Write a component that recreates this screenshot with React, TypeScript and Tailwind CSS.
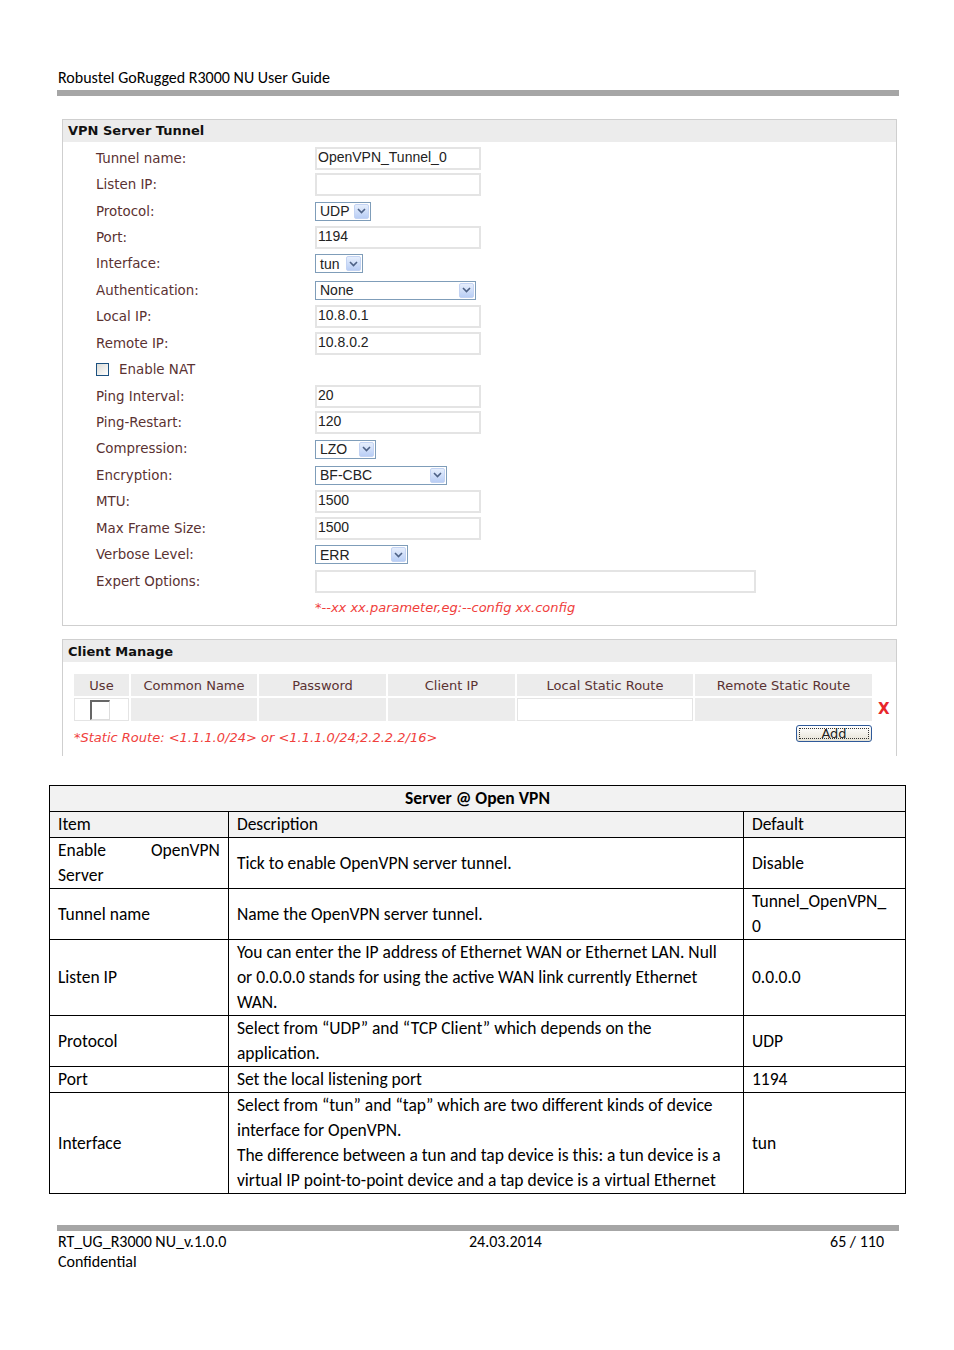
import React from 'react';

const ui = "font-['DejaVu_Sans','Verdana',sans-serif]";
const arial = "font-['Liberation_Sans','Arial',sans-serif]";
const doc = "font-['Carlito','Lato','Open_Sans',sans-serif]";

const Chevron = () => (
  <svg width="9" height="6" viewBox="0 0 9 6">
    <path d="M1 1 L4.5 4.5 L8 1" fill="none" stroke="#4d6185" strokeWidth="1.6" />
  </svg>
);

const TextBox = ({ value = '', wide = false }: { value?: string; wide?: boolean }) => (
  <div
    className={`h-[23px] ${wide ? 'w-[441px]' : 'w-[166px]'} border-2 border-[#e4e4e4] bg-white pl-[1px] text-[14px] leading-[16px] text-[#222] ${arial}`}
  >
    {value}
  </div>
);

const Select = ({ value, width }: { value: string; width: string }) => (
  <div className={`flex h-[19px] ${width} items-center border border-[#7f9db9] bg-white`}>
    <span className={`pl-[4px] text-[14px] leading-none text-[#222] ${arial}`}>{value}</span>
    <span className="ml-auto mr-[1px] flex h-[15px] w-[15px] items-center justify-center rounded-[2px] border border-[#c3d3f3] bg-gradient-to-b from-[#e6eefc] to-[#b9cef5]">
      <Chevron />
    </span>
  </div>
);

type Row = { label: string; field: React.ReactNode };

const rows: Row[] = [
  { label: 'Tunnel name:', field: <TextBox value="OpenVPN_Tunnel_0" /> },
  { label: 'Listen IP:', field: <TextBox /> },
  { label: 'Protocol:', field: <Select value="UDP" width="w-[56px]" /> },
  { label: 'Port:', field: <TextBox value="1194" /> },
  { label: 'Interface:', field: <Select value="tun" width="w-[48px]" /> },
  { label: 'Authentication:', field: <Select value="None" width="w-[161px]" /> },
  { label: 'Local IP:', field: <TextBox value="10.8.0.1" /> },
  { label: 'Remote IP:', field: <TextBox value="10.8.0.2" /> },
];

const rows2: Row[] = [
  { label: 'Ping Interval:', field: <TextBox value="20" /> },
  { label: 'Ping-Restart:', field: <TextBox value="120" /> },
  { label: 'Compression:', field: <Select value="LZO" width="w-[61px]" /> },
  { label: 'Encryption:', field: <Select value="BF-CBC" width="w-[132px]" /> },
  { label: 'MTU:', field: <TextBox value="1500" /> },
  { label: 'Max Frame Size:', field: <TextBox value="1500" /> },
  { label: 'Verbose Level:', field: <Select value="ERR" width="w-[93px]" /> },
  { label: 'Expert Options:', field: <TextBox wide /> },
];

const FormRow = ({ row }: { row: Row }) => (
  <div className="flex h-[26.45px] items-center">
    <div className="w-[252px] pl-[33px] pt-[1px] text-[13.4px] text-[#5a3232]">{row.label}</div>
    <div>{row.field}</div>
  </div>
);

const PanelHead = ({ title }: { title: string }) => (
  <div className="flex h-[22px] items-center bg-[#ececec] pl-[5px] text-[13px] font-bold text-[#111]">{title}</div>
);

const VpnPanel = () => (
  <div className={`mt-[23px] ml-[5px] mr-[2px] border border-[#cfcfcf] ${ui}`}>
    <PanelHead title="VPN Server Tunnel" />
    <div className="pt-[3px] pb-[5px]">
      {rows.map((r) => (
        <FormRow key={r.label} row={r} />
      ))}
      <div className="flex h-[26.45px] items-center pl-[33px] text-[13.4px] text-[#5a3232]">
        <span className="mr-[10px] h-[13px] w-[13px] border border-[#1c5180] bg-gradient-to-br from-[#dcdcd7] to-white" />
        Enable NAT
      </div>
      {rows2.map((r) => (
        <FormRow key={r.label} row={r} />
      ))}
      <div className="flex h-[26px] items-center pl-[252px] text-[13px] italic text-[#f0403c]">
        *--xx xx.parameter,eg:--config xx.config
      </div>
    </div>
  </div>
);

const headCell = 'flex h-[22px] items-center justify-center bg-[#ececec] text-[13px] text-[#5a3232]';

const ClientPanel = () => (
  <div className={`mt-[13px] ml-[5px] mr-[2px] h-[117px] border-x border-t border-[#cfcfcf] ${ui}`}>
    <PanelHead title="Client Manage" />
    <div className="mt-[12px] flex items-start pl-[11px]">
      <div className="w-[798px]">
        <div className="grid grid-cols-[55px_126px_127px_127px_176px_177px] gap-[2px]">
          <div className={headCell}>Use</div>
          <div className={headCell}>Common Name</div>
          <div className={headCell}>Password</div>
          <div className={headCell}>Client IP</div>
          <div className={headCell}>Local Static Route</div>
          <div className={headCell}>Remote Static Route</div>
          <div className="flex h-[23px] items-center border border-[#e4e4e4] bg-white pl-[15px]">
            <span className="h-[20px] w-[20px] border-l-2 border-t-2 border-r border-b border-l-[#666] border-t-[#666] border-r-[#ddd] border-b-[#ddd] bg-white" />
          </div>
          <div className="h-[23px] bg-[#ececec]" />
          <div className="h-[23px] bg-[#ececec]" />
          <div className="h-[23px] bg-[#ececec]" />
          <div className="h-[23px] border border-[#e4e4e4] bg-white" />
          <div className="h-[23px] bg-[#ececec]" />
        </div>
        <div className="mt-[4px] flex items-start">
          <span className="pt-[3px] text-[13px] italic text-[#f0403c]">*Static Route: &lt;1.1.1.0/24&gt; or &lt;1.1.1.0/24;2.2.2.2/16&gt;</span>
          <div className="ml-auto flex h-[17px] w-[76px] items-center justify-center rounded-[3px] border border-[#2f5a9a] bg-gradient-to-b from-white to-[#e6e3d6] p-[2px]">
            <div className={`flex h-full w-full items-center justify-center border border-dotted border-[#333] text-[13px] leading-none text-[#222] ${ui}`}>
              Add
            </div>
          </div>
        </div>
      </div>
      <div className="ml-[6px] mt-[28px] text-[15px] font-bold leading-none text-[#e8262a]">X</div>
    </div>
  </div>
);

const td = 'border border-black px-[8px] align-middle';

const DocTable = () => (
  <table className={`mt-[29px] -mx-[8px] w-[857px] border-collapse text-[17.5px] leading-[25px] text-black ${doc}`}>
    <colgroup>
      <col className="w-[179px]" />
      <col className="w-[516px]" />
      <col className="w-[162px]" />
    </colgroup>
    <tbody>
      <tr className="h-[26px] bg-[#f2f2f2]">
        <td colSpan={3} className={`${td} text-center font-bold`}>Server @ Open VPN</td>
      </tr>
      <tr className="h-[26px] bg-[#f2f2f2]">
        <td className={td}>Item</td>
        <td className={td}>Description</td>
        <td className={td}>Default</td>
      </tr>
      <tr className="h-[51px]">
        <td className={td}>
          <div className="flex justify-between">
            <span>Enable</span>
            <span>OpenVPN</span>
          </div>
          <div>Server</div>
        </td>
        <td className={td}>Tick to enable OpenVPN server tunnel.</td>
        <td className={td}>Disable</td>
      </tr>
      <tr className="h-[51px]">
        <td className={td}>Tunnel name</td>
        <td className={td}>Name the OpenVPN server tunnel.</td>
        <td className={td}>
          Tunnel_OpenVPN_
          <br />0
        </td>
      </tr>
      <tr className="h-[75px]">
        <td className={td}>Listen IP</td>
        <td className={td}>
          You can enter the IP address of Ethernet WAN or Ethernet LAN. Null
          <br />
          or 0.0.0.0 stands for using the active WAN link currently Ethernet
          <br />
          WAN.
        </td>
        <td className={td}>0.0.0.0</td>
      </tr>
      <tr className="h-[51px]">
        <td className={td}>Protocol</td>
        <td className={td}>
          Select from “UDP” and “TCP Client” which depends on the
          <br />
          application.
        </td>
        <td className={td}>UDP</td>
      </tr>
      <tr className="h-[26px]">
        <td className={td}>Port</td>
        <td className={td}>Set the local listening port</td>
        <td className={td}>1194</td>
      </tr>
      <tr className="h-[101px]">
        <td className={td}>Interface</td>
        <td className={td}>
          Select from “tun” and “tap” which are two different kinds of device
          <br />
          interface for OpenVPN.
          <br />
          The difference between a tun and tap device is this: a tun device is a
          <br />
          virtual IP point-to-point device and a tap device is a virtual Ethernet
        </td>
        <td className={td}>tun</td>
      </tr>
    </tbody>
  </table>
);

export default function App() {
  return (
    <div className="min-h-[1350px] w-[954px] bg-white">
      <div className={`mx-[57px] w-[842px] pt-[67px] text-[16px] text-black ${doc}`}>
        <div className="h-[23px] pl-[1px] leading-[22px]">Robustel GoRugged R3000 NU User Guide</div>
        <div className="h-[6px] bg-[#a6a6a6]" />
      </div>
      <div className="mx-[57px] w-[842px]">
        <VpnPanel />
        <ClientPanel />
        <DocTable />
      </div>
      <div className={`mx-[57px] mt-[31px] w-[842px] text-[16px] leading-[20px] text-black ${doc}`}>
        <div className="h-[6px] bg-[#a6a6a6]" />
        <div className="mt-[1px] flex pl-[1px] pr-[15px]">
          <span className="w-[300px]">RT_UG_R3000 NU_v.1.0.0</span>
          <span className="flex-1 pl-[111px]">24.03.2014</span>
          <span>65 / 110</span>
        </div>
        <div className="pl-[1px]">Confidential</div>
      </div>
    </div>
  );
}
